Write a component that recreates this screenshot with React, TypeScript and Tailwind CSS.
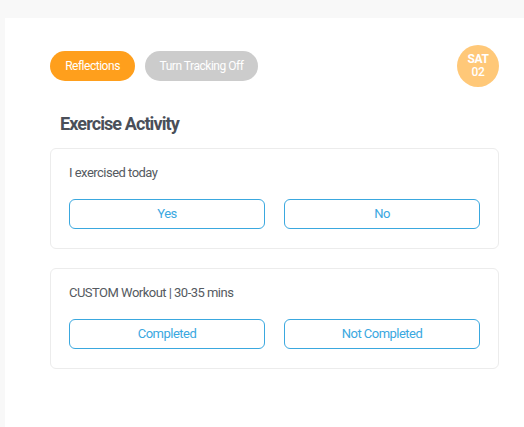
export default function App() {
  const font = { fontFamily: '"Roboto", "Liberation Sans", sans-serif' };
  return (
    <div
      className="h-[427px] w-[524px] bg-[#f8f8f8] pl-[5px] pt-[18px] font-['Roboto',_'Liberation_Sans',_sans-serif]"
      style={font}
    >
      <div className="h-full bg-white pl-[45px] pr-[25px] pt-[27px]">
        {/* Header */}
        <div className="flex h-[42px] items-center">
          <button className="h-[30px] w-[85px] rounded-full bg-[#ff9f1c] text-[12px] tracking-[-0.04em] text-white">
            Reflections
          </button>
          <button className="ml-[10px] h-[30px] w-[113px] rounded-full bg-[#cccccc] text-[12px] tracking-[-0.04em] text-white">
            Turn Tracking Off
          </button>
          <div className="ml-auto flex h-[42px] w-[42px] flex-col items-center justify-center rounded-full bg-[#ffc878] text-[12px] font-bold leading-[13px] tracking-[-0.03em] text-white">
            <span>SAT</span>
            <span className="font-medium">02</span>
          </div>
        </div>

        <h2 className="mt-[25px] pl-[10px] text-[18px] font-bold leading-[24px] tracking-[-0.05em] text-[#4a4f59]">
          Exercise Activity
        </h2>

        <div className="mt-[12px] flex flex-col gap-[19px]">
          <Card label="I exercised today" options={["Yes", "No"]} />
          <Card label="CUSTOM Workout | 30-35 mins" options={["Completed", "Not Completed"]} />
        </div>
      </div>
    </div>
  );
}

function Card({ label, options }: { label: string; options: string[] }) {
  return (
    <div className="rounded-[6px] border border-[#ececec] px-[18px] pb-[19px] pt-[15px]">
      <p className="text-[13px] leading-[18px] tracking-[-0.04em] text-[#555a61]">{label}</p>
      <div className="mt-[17px] grid grid-cols-2 gap-[19px]">
        {options.map((o) => (
          <button
            key={o}
            className="h-[30px] rounded-[6px] border border-[#3aa8df] text-[13px] tracking-[-0.04em] text-[#3aa8df]"
          >
            {o}
          </button>
        ))}
      </div>
    </div>
  );
}
